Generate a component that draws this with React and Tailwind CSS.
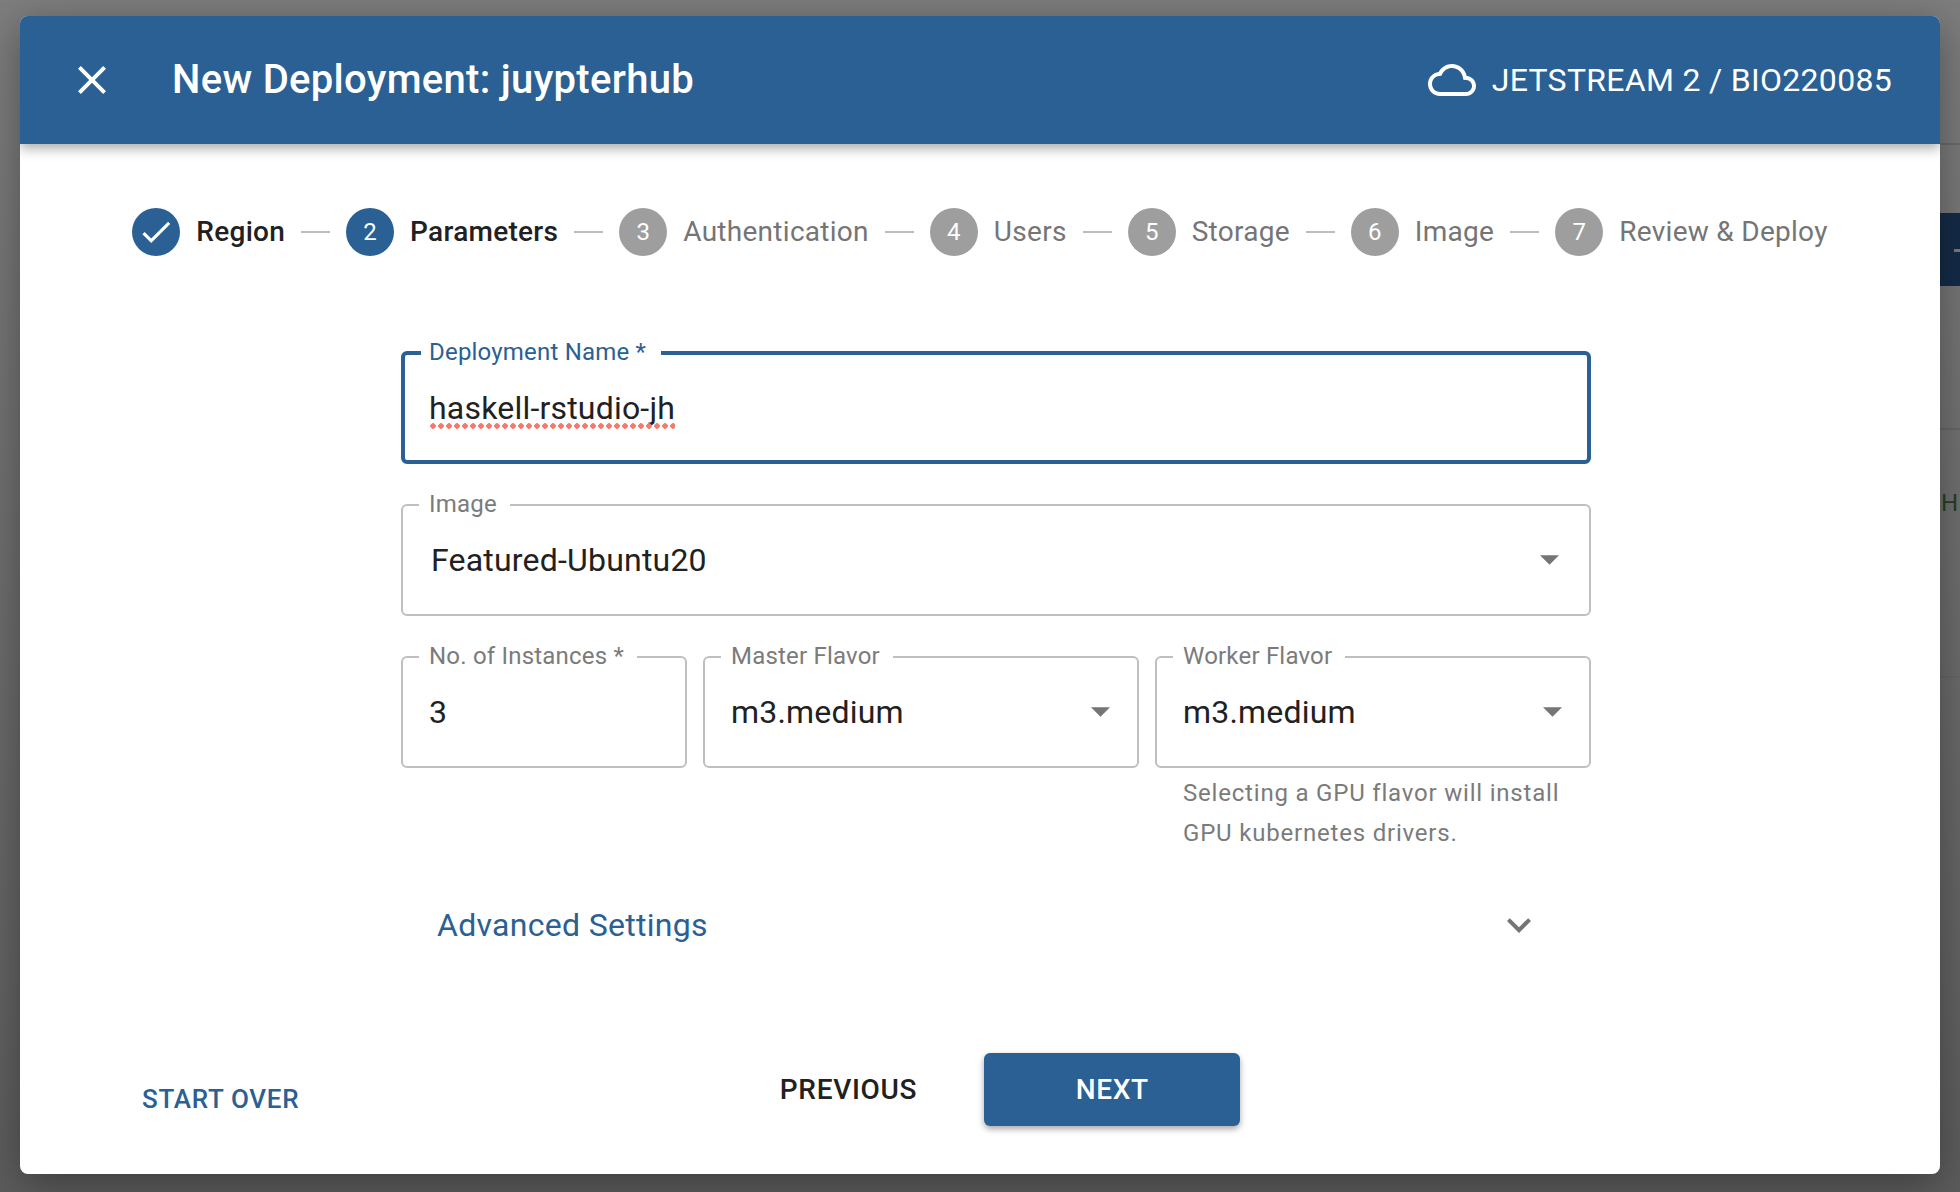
const steps = [
  { n: 1, label: 'Region', state: 'done' },
  { n: 2, label: 'Parameters', state: 'active' },
  { n: 3, label: 'Authentication' },
  { n: 4, label: 'Users' },
  { n: 5, label: 'Storage' },
  { n: 6, label: 'Image' },
  { n: 7, label: 'Review & Deploy' },
];

const Icon = ({ d, size, viewBox = '0 0 24 24', height, className }) => (
  <svg width={size} height={height || size} viewBox={viewBox} fill="currentColor" className={className}>
    <path d={d} />
  </svg>
);

const closePath = 'M19 6.41 17.59 5 12 10.59 6.41 5 5 6.41 10.59 12 5 17.59 6.41 19 12 13.41 17.59 19 19 17.59 13.41 12z';
const checkPath = 'M9 16.17 4.83 12l-1.42 1.41L9 19 21 7l-1.41-1.41z';
const expandPath = 'M16.59 8.59 12 13.17 7.41 8.59 6 10l6 6 6-6z';
const cloudPath = 'M12 6c2.62 0 4.88 1.86 5.39 4.43l.3 1.5 1.53.11c1.56.1 2.78 1.41 2.78 2.96 0 1.65-1.35 3-3 3H6c-2.21 0-4-1.79-4-4 0-2.05 1.53-3.76 3.56-3.97l1.07-.11.5-.95C8.08 7.14 9.94 6 12 6m0-2C9.11 4 6.6 5.64 5.35 8.04 2.34 8.36 0 10.91 0 14c0 3.31 2.69 6 6 6h13c2.76 0 5-2.24 5-5 0-2.64-2.05-4.78-4.65-4.96C18.67 6.59 15.64 4 12 4z';

const Caret = ({ className }) => (
  <svg width="19" height="10" viewBox="0 0 20 10" className={className}>
    <path d="M0 0H20L10 10Z" fill="#757575" />
  </svg>
);

const Field = ({ label, required, focused, caret, children, className }) => (
  <div className={`relative ${className || ''}`}>
    <fieldset className={`absolute inset-0 rounded-[6px] px-[16px] ${focused ? 'border-[4px] border-[#2a6093]' : 'border-[2px] border-[#bfbfbf]'}`}>
      <legend className="h-0 text-[24px] tracking-[0.2px] pl-[10px] pr-[13px]">
        <span className="invisible">{label}{required ? ' *' : ''}</span>
      </legend>
    </fieldset>
    <label className={`absolute left-[28px] text-[24px] tracking-[0.2px] leading-[28px] ${focused ? '-top-[13px] text-[#2a6093]' : '-top-[14px] text-[#7b7b7b]'}`}>
      {label}{required ? ' *' : ''}
    </label>
    <div className="absolute inset-0 flex items-center justify-between pl-[28px] text-[32px] tracking-[0.2px] text-[#212121]">
      {children}
      {caret && <Caret className={caret} />}
    </div>
  </div>
);

export default function App() {
  return (
    <div className="relative w-[1960px] h-[1192px] overflow-hidden bg-[linear-gradient(#7d7d7d,#5c5c5c)] font-['Roboto',sans-serif]">
      {/* page behind the dialog */}
      <div className="absolute right-0 top-[143px] w-[20px] h-[2px] bg-[#6a6a6a]" />
      <div className="absolute right-0 top-[213px] w-[20px] h-[73px] bg-[#142b47]" />
      <div className="absolute right-0 top-[249px] w-[6px] h-[3px] bg-[#7a7a7a]" />
      <div className="absolute right-0 top-[428px] w-[20px] h-[250px] border-y-2 border-[#666666]" />
      <div className="absolute left-[1941px] top-[488px] text-[24px] leading-[30px] text-[#24401f]">H</div>

      <div className="relative mx-[20px] mt-[16px] h-[1158px] bg-white rounded-[8px] overflow-hidden shadow-[0_10px_40px_rgba(0,0,0,0.35)] flex flex-col">
        {/* Header */}
        <div className="h-[128px] shrink-0 bg-[#2a6093] text-white flex items-center justify-between pl-[48px] pr-[48px] shadow-[0_4px_12px_rgba(0,0,0,0.35)] z-10">
          <div className="flex items-center">
            <Icon d={closePath} size={48} />
            <h1 className="ml-[56px] text-[40px] font-medium tracking-[0.3px]">New Deployment: juypterhub</h1>
          </div>
          <div className="flex items-center gap-[16px]">
            <Icon d={cloudPath} size={48} height={32} viewBox="0 4 24 16" />
            <span className="text-[32px] tracking-[0.3px]">JETSTREAM 2 / BIO220085</span>
          </div>
        </div>

        {/* Stepper */}
        <div className="flex justify-center items-center gap-[16px] pt-[64px]">
          {steps.map((s, i) => (
            <div key={s.n} className="flex items-center gap-[16px]">
              {i > 0 && <div className="w-[29px] h-[2px] bg-[#bdbdbd]" />}
              <div className={`w-[48px] h-[48px] rounded-full flex items-center justify-center text-white text-[24px] ${s.state ? 'bg-[#2a6093]' : 'bg-[#9e9e9e]'}`}>
                {s.state === 'done' ? <Icon d={checkPath} size={38} /> : s.n}
              </div>
              <span className={`text-[28px] tracking-[0.28px] ${s.state ? 'font-medium text-[#212121]' : 'text-[#757575]'}`}>{s.label}</span>
            </div>
          ))}
        </div>

        {/* Form */}
        <div className="ml-[381px] w-[1190px] mt-[95px] flex flex-col gap-[40px]">
          <Field label="Deployment Name" required focused className="h-[113px]">
            <span className="relative">
              haskell-rstudio-jh
              <span className="absolute left-0 right-0 bottom-[3px] h-[6px] bg-[radial-gradient(circle,#f47c6f_2.5px,transparent_3px)] bg-[length:8px_6px]" />
            </span>
          </Field>
          <Field label="Image" caret="mr-[32px]" className="h-[112px]">
            <span className="ml-[2px]">Featured-Ubuntu20</span>
          </Field>
          <div className="flex gap-[16px]">
            <Field label="No. of Instances" required className="h-[112px] w-[286px]">3</Field>
            <Field label="Master Flavor" caret="mr-[29px]" className="h-[112px] w-[436px]">m3.medium</Field>
            <Field label="Worker Flavor" caret="mr-[29px]" className="h-[112px] w-[436px]">m3.medium</Field>
          </div>
        </div>

        <p className="ml-[1163px] mt-[5px] w-[390px] text-[24px] leading-[40px] tracking-[0.8px] text-[#7b7b7b]">
          Selecting a GPU flavor will install GPU kubernetes drivers.
        </p>

        {/* Advanced */}
        <div className="ml-[417px] w-[1106px] mt-[48px] flex items-center justify-between text-[32px] tracking-[0.3px] text-[#2a6093]">
          <span>Advanced Settings</span>
          <Icon d={expandPath} size={48} className="text-[#757575]" />
        </div>

        {/* Footer */}
        <div className="relative mt-[104px] flex justify-center">
          <button className="absolute left-[122px] top-[27px] text-[26px] font-medium tracking-[0.7px] text-[#2a6093]">START OVER</button>
          <div className="ml-[60px] flex items-center gap-[67px]">
            <button className="text-[28px] font-medium tracking-[0.7px] text-[#212121]">PREVIOUS</button>
            <button className="w-[256px] h-[73px] rounded-[6px] bg-[#2a6093] text-white text-[28px] font-medium tracking-[0.6px] shadow-[0_3px_6px_rgba(0,0,0,0.35)]">NEXT</button>
          </div>
        </div>
      </div>
    </div>
  );
}
